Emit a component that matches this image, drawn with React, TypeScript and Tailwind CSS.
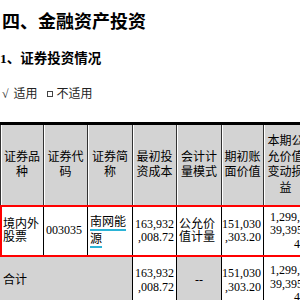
import React from 'react';

const cjk = '"Noto Sans CJK SC", sans-serif';
const mixed = '"Liberation Serif", "Noto Sans CJK SC", serif';

const cols = 'grid grid-cols-[43px_44px_45px_44px_45px_42px_44px]';

const headers = [
  ['证券品', '种'],
  ['证券代', '码'],
  ['证券简', '称'],
  ['最初投', '资成本'],
  ['会计计', '量模式'],
  ['期初账', '面价值'],
  ['本期公', '允价值', '变动损', '益'],
];

function Lines({ lines }: { lines: string[] }) {
  return (
    <div>
      {lines.map((l, i) => (
        <div key={i}>{l}</div>
      ))}
    </div>
  );
}

export default function App() {
  return (
    <div className="w-[300px] h-[300px] overflow-hidden bg-white text-black" style={{ fontFamily: mixed }}>
      <div className="pl-[2px] pt-[8px] text-[18px] leading-[24px] font-bold" style={{ fontFamily: cjk }}>
        四、金融资产投资
      </div>
      <div className="mt-[17px] text-[13.5px] leading-[20px] font-bold">
        1、证券投资情况
      </div>
      <div className="mt-[17px] pl-[2px] flex items-center text-[12px] leading-[16px] text-[#222]">
        <span>√</span>
        <span className="ml-[5px]">适用</span>
        <span className="ml-[9px] inline-block w-[6px] h-[6px] border border-[#444]" />
        <span className="ml-[4px]">不适用</span>
      </div>

      <div className="mt-[20px] w-[307px] border-t-[3px] border-black text-[12px]">
        {/* header */}
        <div className={`${cols} h-[80px] leading-[15.5px]`}>
          {headers.map((h, i) => (
            <div
              key={i}
              className="flex items-center justify-center text-center bg-[#d3d3d3] border-l border-[#333] shadow-[inset_1px_0_0_#fff]"
            >
              <Lines lines={h} />
            </div>
          ))}
        </div>

        {/* body row */}
        <div className={`${cols} h-[52px] border-y-2 border-[#f00] leading-[13.5px]`}>
          <div className="flex items-center pl-[1px] border-l-2 border-[#f00]">
            <Lines lines={['境内外', '股票']} />
          </div>
          <div className="flex items-center pl-[2px] border-l border-black">003035</div>
          <div className="flex items-center pl-[2px] border-l border-black">
            <div className="leading-[17px]">
              <span className="underline decoration-[#2bb3d6] decoration-[1.5px] underline-offset-[3px]">南网能</span>
              <br />
              <span className="underline decoration-[#2bb3d6] decoration-[1.5px] underline-offset-[3px]">源</span>
            </div>
          </div>
          <div className="flex items-center justify-end pr-[2px] text-right border-l border-black">
            <Lines lines={['163,932', ',008.72']} />
          </div>
          <div className="flex items-center pl-[2px] border-l border-black">
            <Lines lines={['公允价', '值计量']} />
          </div>
          <div className="flex items-center justify-end pr-[2px] text-right border-l border-black">
            <Lines lines={['151,030', ',303.20']} />
          </div>
          <div className="flex items-center justify-end pr-[1px] text-right border-l border-black">
            <Lines lines={['1,299,9', '39,395.', '46']} />
          </div>
        </div>

        {/* total row */}
        <div className={`${cols} h-[47px] border-b border-black leading-[13.5px]`}>
          <div className="col-span-3 flex items-center pl-[3px] bg-[#d3d3d3]">合计</div>
          <div className="flex items-center justify-end pr-[2px] text-right border-l border-black">
            <Lines lines={['163,932', ',008.72']} />
          </div>
          <div className="flex items-center justify-center bg-[#d3d3d3] border-l border-black">--</div>
          <div className="flex items-center justify-end pr-[2px] text-right border-l border-black">
            <Lines lines={['151,030', ',303.20']} />
          </div>
          <div className="flex items-start justify-end pt-[7px] pr-[1px] text-right border-l border-black">
            <Lines lines={['1,299,9', '39,395.', '46']} />
          </div>
        </div>
      </div>
    </div>
  );
}
